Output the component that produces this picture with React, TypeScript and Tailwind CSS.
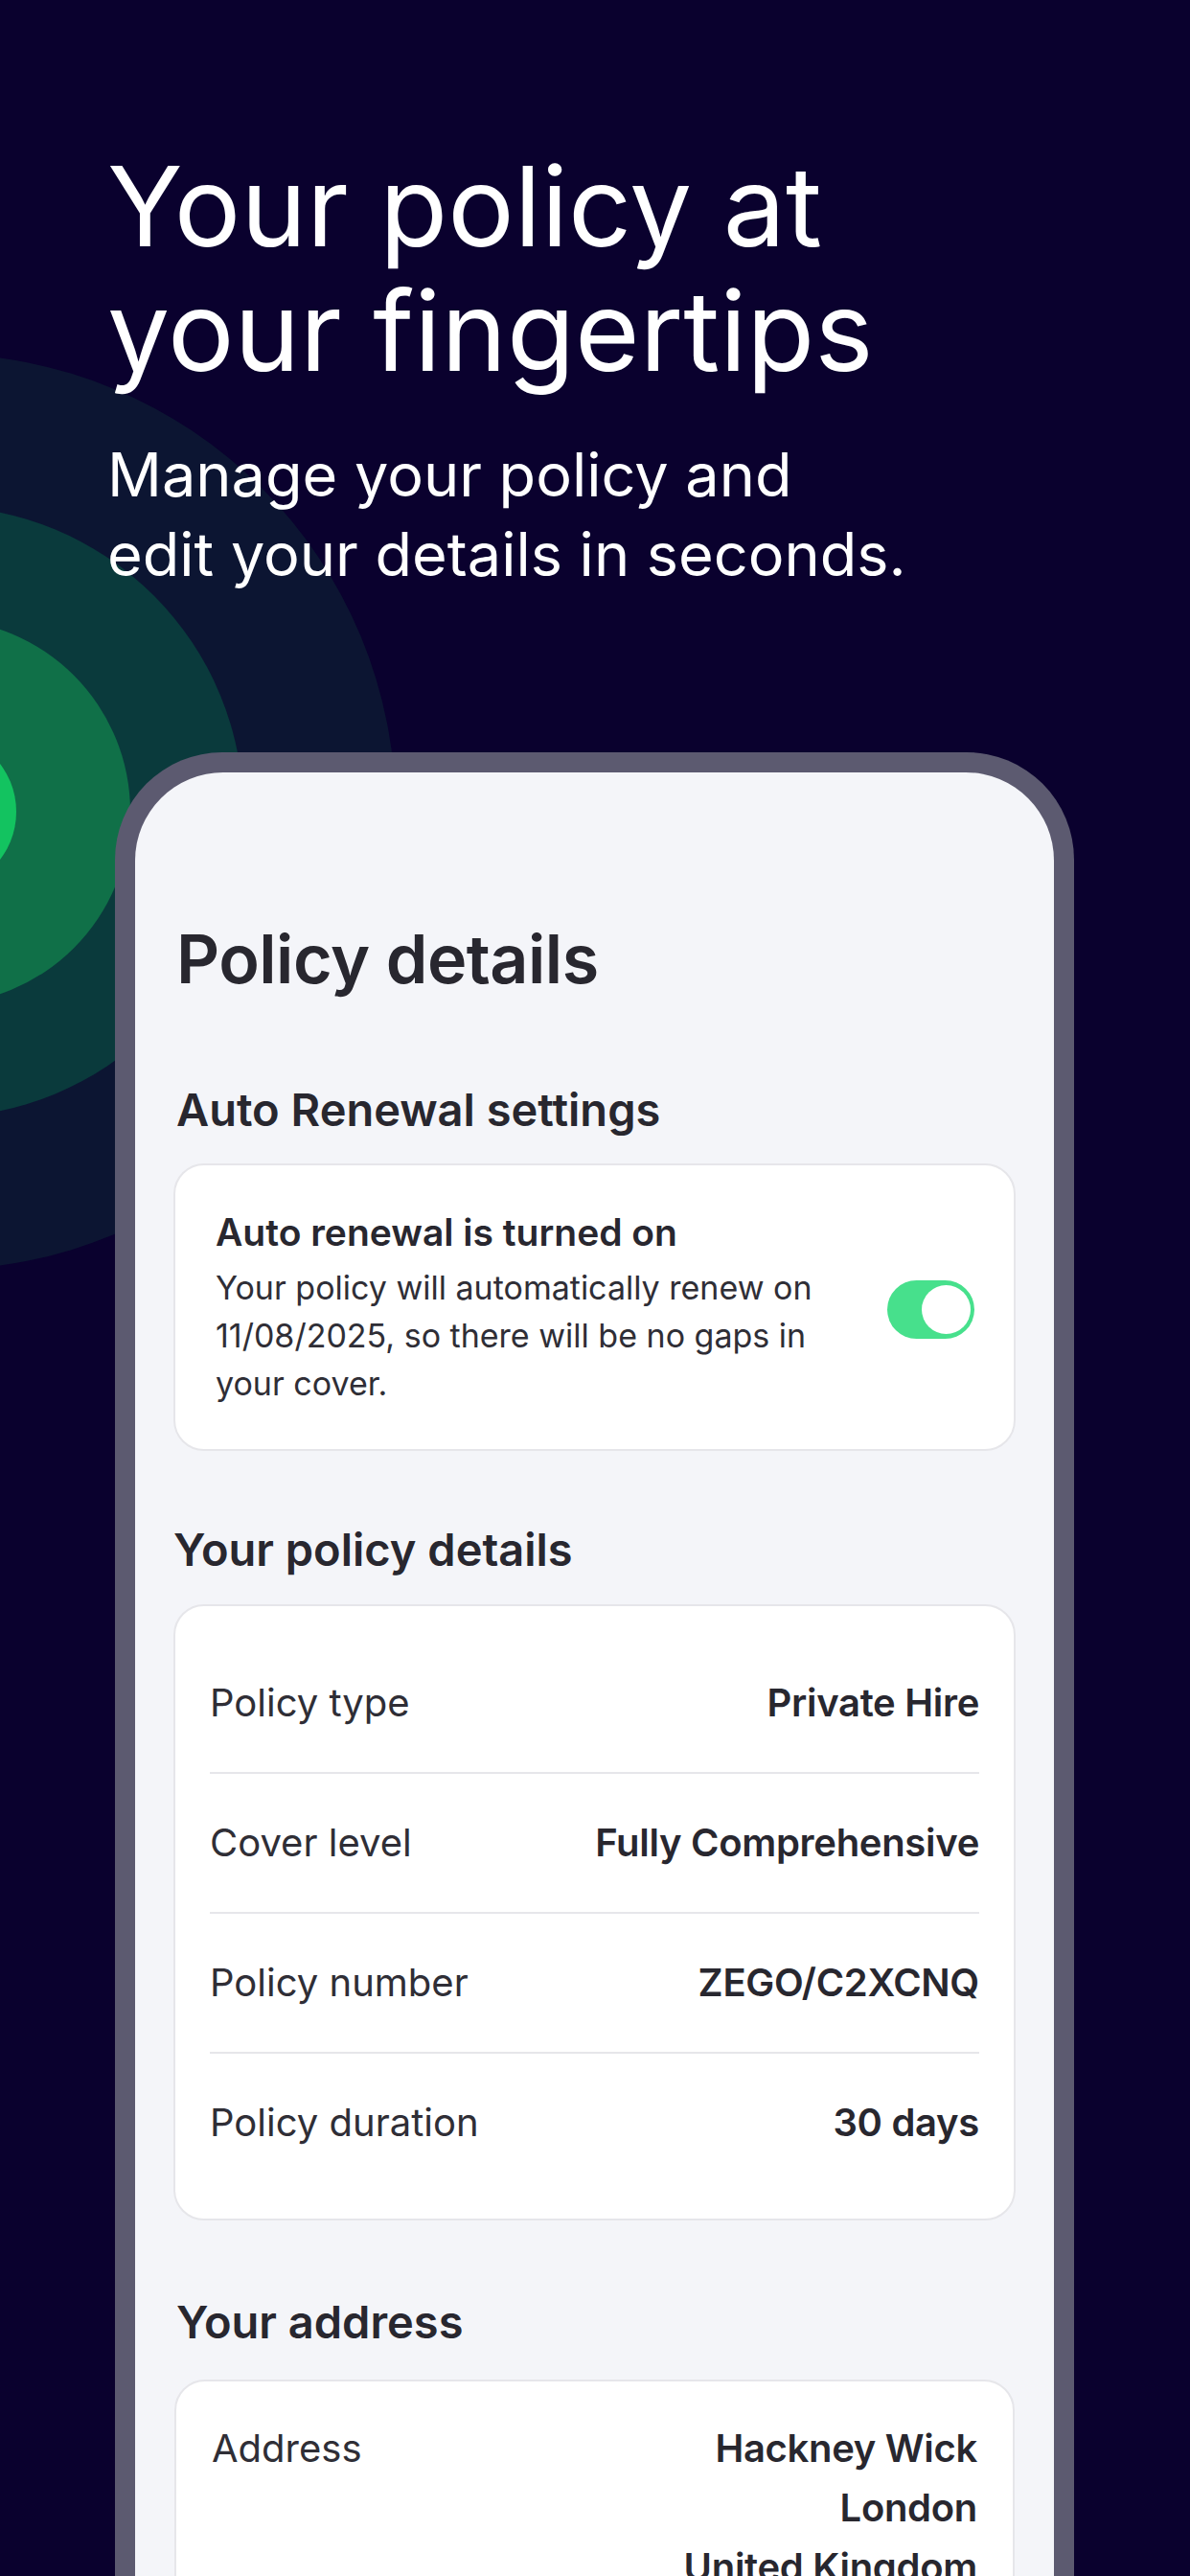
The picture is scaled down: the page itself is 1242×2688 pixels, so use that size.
import React from "react";

const font = { fontFamily: "Inter, 'Liberation Sans', sans-serif" };

const policyRows = [
  { label: "Policy type", value: "Private Hire" },
  { label: "Cover level", value: "Fully Comprehensive" },
  { label: "Policy number", value: "ZEGO/C2XCNQ" },
  { label: "Policy duration", value: "30 days" },
];

const Toggle = () => (
  <div className="flex-none flex items-center justify-end w-[91px] h-[61px] rounded-full bg-[#47e08c] pr-[4px]">
    <div className="w-[51px] h-[51px] rounded-full bg-white" />
  </div>
);

const App = () => {
  return (
    <div
      className="relative w-[1242px] h-[2688px] overflow-hidden bg-[#0a012e]"
      style={font}
    >
      {/* background rings */}
      <div className="absolute left-[-543px] top-[369px] w-[956px] h-[956px] rounded-full bg-[#0c1532]" />
      <div className="absolute left-[-384px] top-[528px] w-[638px] h-[638px] rounded-full bg-[#0a3a3c]" />
      <div className="absolute left-[-266px] top-[646px] w-[402px] h-[402px] rounded-full bg-[#107048]" />
      <div className="absolute left-[-147px] top-[765px] w-[164px] h-[164px] rounded-full bg-[#13c360]" />

      <div className="relative flex flex-col">
        <div className="pl-[112px] pt-[150px]">
          <h1 className="text-[116px] leading-[130px] font-normal text-white">
            Your policy at
            <br />
            your fingertips
          </h1>
          <p className="mt-[44px] text-[63px] leading-[83px] text-white">
            Manage your policy and
            <br />
            edit your details in seconds.
          </p>
        </div>

        <div className="ml-[120px] mt-[165px] w-[1001px] rounded-t-[112px] bg-[#5c5a70] px-[21px] pt-[21px]">
          <div className="rounded-t-[92px] bg-[#f4f5f9] px-[40px] pt-[153px] pb-[300px] text-[#28272f]">
            <h2 className="ml-[3px] text-[70px] leading-[84px] font-semibold tracking-[-0.5px]">
              Policy details
            </h2>

            <h3 className="ml-[3px] mt-[87px] text-[47px] leading-[56px] font-semibold">
              Auto Renewal settings
            </h3>
            <div className="mt-[28px] flex items-center justify-between rounded-[32px] border-2 border-[#e6e6ea] bg-white pl-[42px] pr-[41px] pt-[47px] pb-[43px]">
              <div>
                <div className="text-[39px] leading-[46px] font-semibold">
                  Auto renewal is turned on
                </div>
                <div className="mt-[10px] text-[34px] leading-[50px] text-[#2f2e36]">
                  Your policy will automatically renew on
                  <br />
                  11/08/2025, so there will be no gaps in
                  <br />
                  your cover.
                </div>
              </div>
              <Toggle />
            </div>

            <h3 className="mt-[75px] text-[47px] leading-[56px] font-semibold">
              Your policy details
            </h3>
            <div className="mt-[29px] rounded-[32px] border-2 border-[#e6e6ea] bg-white px-[36px] pt-[29px] pb-[28px]">
              {policyRows.map((row, i) => (
                <div key={row.label}>
                  {i > 0 && <div className="h-[2px] bg-[#e6e6ea]" />}
                  <div className="flex h-[144px] items-center justify-between text-[40px]">
                    <span className="text-[#2f2e36]">{row.label}</span>
                    <span className="font-semibold tracking-[-0.3px]">{row.value}</span>
                  </div>
                </div>
              ))}
            </div>

            <h3 className="ml-[3px] mt-[78px] text-[47px] leading-[56px] font-semibold">
              Your address
            </h3>
            <div className="mx-[1px] mt-[32px] flex justify-between rounded-[32px] border-2 border-[#e6e6ea] bg-white px-[37px] pt-[39px] pb-[40px] text-[40px] leading-[62px]">
              <span className="text-[#2f2e36]">Address</span>
              <div className="text-right font-semibold tracking-[-0.3px]">
                <div>Hackney Wick</div>
                <div>London</div>
                <div>United Kingdom</div>
                <div>E9 5EN</div>
              </div>
            </div>
          </div>
        </div>
      </div>
    </div>
  );
};

export default App;
